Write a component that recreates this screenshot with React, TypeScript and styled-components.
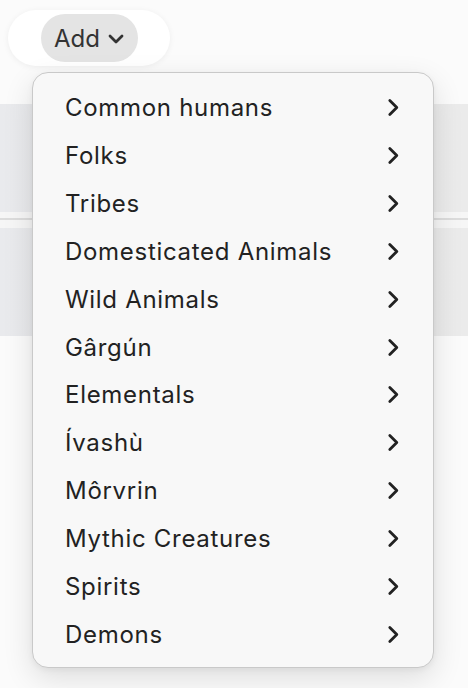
import React from "react";
import styled, { createGlobalStyle } from "styled-components";

const GlobalStyle = createGlobalStyle`
  html, body {
    margin: 0;
    padding: 0;
    background: #fbfbfb;
    font-family: Inter, "Noto Sans", "Liberation Sans", sans-serif;
    -webkit-font-smoothing: antialiased;
  }
`;

const groups = [
  "Common humans",
  "Folks",
  "Tribes",
  "Domesticated Animals",
  "Wild Animals",
  "Gârgún",
  "Elementals",
  "Ívashù",
  "Môrvrin",
  "Mythic Creatures",
  "Spirits",
  "Demons",
];

const ChevronDown = () => (
  <svg width="18" height="12" viewBox="0 0 18 12" fill="none">
    <path d="M3 3 L9 9 L15 3" stroke="#333" strokeWidth="2.8" strokeLinecap="round" strokeLinejoin="round" />
  </svg>
);

const ChevronRight = () => (
  <svg width="13" height="19" viewBox="0 0 13 19" fill="none">
    <path d="M2.8 2.5 L9.8 9.5 L2.8 16.5" stroke="#222" strokeWidth="2.8" strokeLinecap="round" strokeLinejoin="round" />
  </svg>
);

const App: React.FC = () => {
  return (
    <>
      <GlobalStyle />
      <Page>
        <Header>
          <Toolbar>
            <AddButton>
              Add <ChevronDown />
            </AddButton>
          </Toolbar>
        </Header>
        <Band />
        <Divider />
        <Band />

        <Menu>
          {groups.map((g) => (
            <MenuItem key={g}>
              <span>{g}</span>
              <ChevronRight />
            </MenuItem>
          ))}
        </Menu>
      </Page>
    </>
  );
};

const Page = styled.div`
  position: relative;
  width: 468px;
  height: 688px;
  overflow: hidden;
  display: flex;
  flex-direction: column;
`;

const Header = styled.div`
  height: 104px;
  padding: 10px 0 0 8px;
  box-sizing: border-box;
`;

const Toolbar = styled.div`
  width: 162px;
  height: 56px;
  border-radius: 28px;
  background: #ffffff;
  box-shadow: 0 1px 6px rgba(0, 0, 0, 0.06);
  display: flex;
  align-items: center;
  justify-content: center;
`;

const AddButton = styled.div`
  width: 97px;
  height: 48px;
  border-radius: 24px;
  background: #e4e4e4;
  color: #333;
  font-size: 24px;
  display: flex;
  align-items: center;
  justify-content: center;
  gap: 7px;
  box-sizing: border-box;
  padding: 1px 0 0 1px;
`;

const Band = styled.div`
  height: 108px;
  background: linear-gradient(90deg, #e9eaed 0%, #ececec 40%, #ebebeb 100%);
`;

const Divider = styled.div`
  height: 16px;
  background: #f6f6f6;
  display: flex;
  flex-direction: column;
  &::before {
    content: "";
    margin-top: 6px;
    height: 2px;
    background: #dcdcdc;
  }
`;

const Menu = styled.div`
  position: absolute;
  left: 32px;
  top: 72px;
  width: 402px;
  height: 596px;
  box-sizing: border-box;
  padding: 11px 0 9px;
  background: #f8f8f8;
  border: 1px solid #c9c9c9;
  border-radius: 16px;
  box-shadow: 0 10px 30px rgba(0, 0, 0, 0.12), 0 2px 6px rgba(0, 0, 0, 0.05);
  display: flex;
  flex-direction: column;
`;

const MenuItem = styled.div`
  height: 48px;
  display: flex;
  align-items: center;
  justify-content: space-between;
  padding: 0 33px 0 32px;
  font-size: 24px;
  color: #222;
  letter-spacing: 0.7px;
`;

export default App;
